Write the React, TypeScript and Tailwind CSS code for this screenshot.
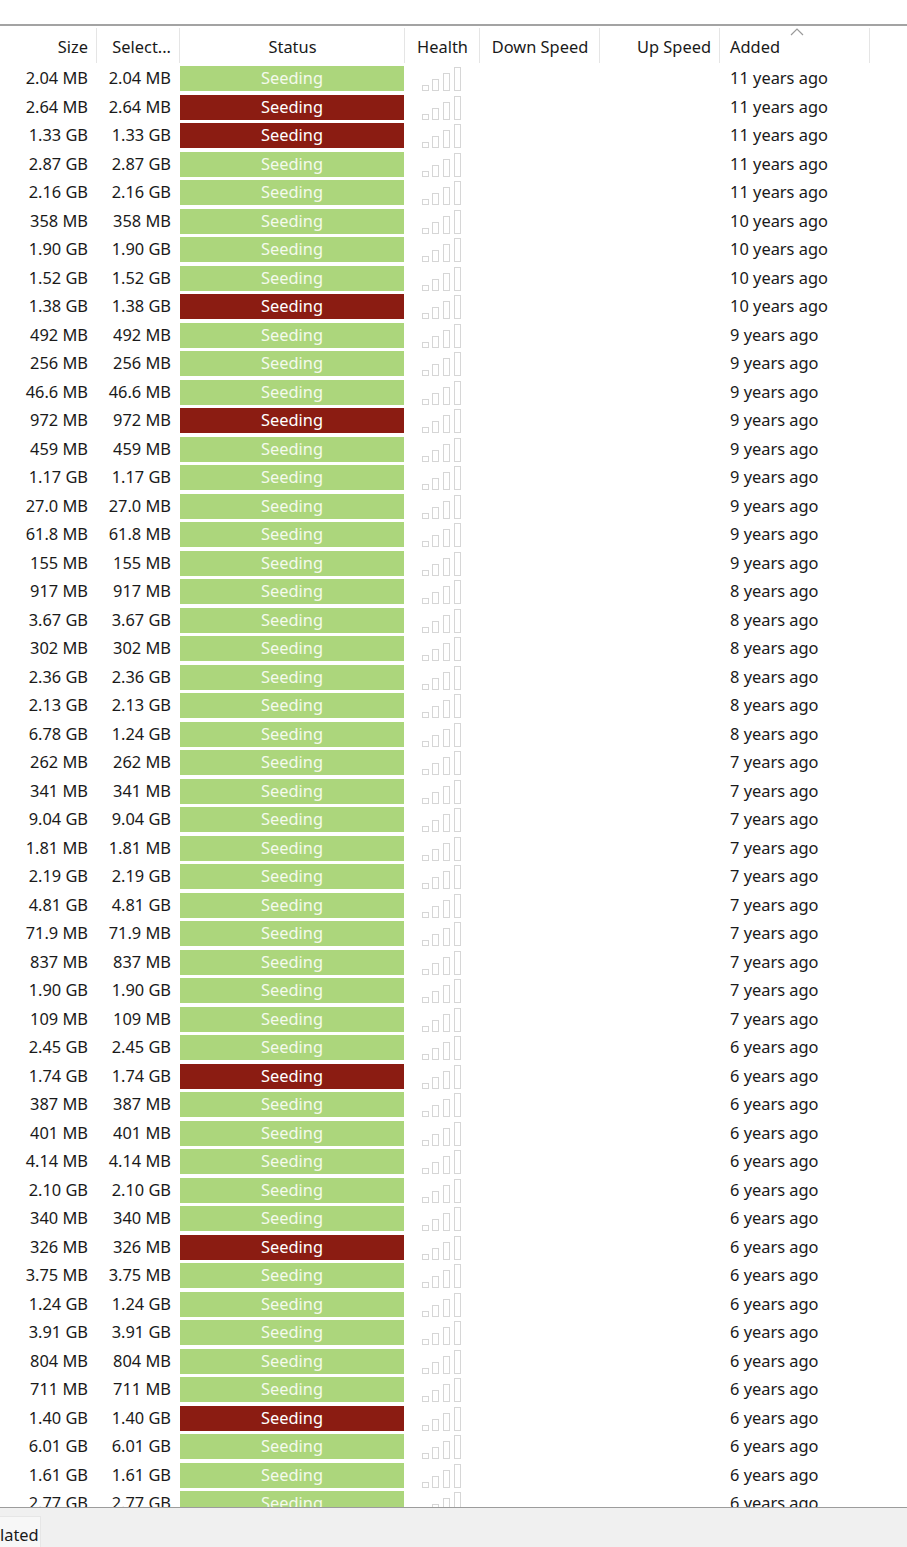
import React from 'react';

type Row = { size: string; sel?: string; bad?: boolean; age: number };

const rows: Row[] = [
  { size: '2.04 MB', age: 11 },
  { size: '2.64 MB', bad: true, age: 11 },
  { size: '1.33 GB', bad: true, age: 11 },
  { size: '2.87 GB', age: 11 },
  { size: '2.16 GB', age: 11 },
  { size: '358 MB', age: 10 },
  { size: '1.90 GB', age: 10 },
  { size: '1.52 GB', age: 10 },
  { size: '1.38 GB', bad: true, age: 10 },
  { size: '492 MB', age: 9 },
  { size: '256 MB', age: 9 },
  { size: '46.6 MB', age: 9 },
  { size: '972 MB', bad: true, age: 9 },
  { size: '459 MB', age: 9 },
  { size: '1.17 GB', age: 9 },
  { size: '27.0 MB', age: 9 },
  { size: '61.8 MB', age: 9 },
  { size: '155 MB', age: 9 },
  { size: '917 MB', age: 8 },
  { size: '3.67 GB', age: 8 },
  { size: '302 MB', age: 8 },
  { size: '2.36 GB', age: 8 },
  { size: '2.13 GB', age: 8 },
  { size: '6.78 GB', sel: '1.24 GB', age: 8 },
  { size: '262 MB', age: 7 },
  { size: '341 MB', age: 7 },
  { size: '9.04 GB', age: 7 },
  { size: '1.81 MB', age: 7 },
  { size: '2.19 GB', age: 7 },
  { size: '4.81 GB', age: 7 },
  { size: '71.9 MB', age: 7 },
  { size: '837 MB', age: 7 },
  { size: '1.90 GB', age: 7 },
  { size: '109 MB', age: 7 },
  { size: '2.45 GB', age: 6 },
  { size: '1.74 GB', bad: true, age: 6 },
  { size: '387 MB', age: 6 },
  { size: '401 MB', age: 6 },
  { size: '4.14 MB', age: 6 },
  { size: '2.10 GB', age: 6 },
  { size: '340 MB', age: 6 },
  { size: '326 MB', bad: true, age: 6 },
  { size: '3.75 MB', age: 6 },
  { size: '1.24 GB', age: 6 },
  { size: '3.91 GB', age: 6 },
  { size: '804 MB', age: 6 },
  { size: '711 MB', age: 6 },
  { size: '1.40 GB', bad: true, age: 6 },
  { size: '6.01 GB', age: 6 },
  { size: '1.61 GB', age: 6 },
  { size: '2.77 GB', age: 6 },
];

const HealthIcon = () => (
  <svg width="41" height="25" viewBox="0 0 41 25" className="block">
    <rect x="0.5" y="19.5" width="6" height="5" fill="none" stroke="#d6d6d6" />
    <rect x="10.5" y="13.5" width="6" height="11" fill="none" stroke="#d6d6d6" />
    <rect x="21.5" y="7.5" width="6" height="17" fill="none" stroke="#d6d6d6" />
    <rect x="32.5" y="1.5" width="6" height="23" fill="none" stroke="#d6d6d6" />
  </svg>
);

const Sep = () => <div className="absolute right-0 top-[2px] bottom-[1px] w-px bg-[#e5e5e5]" />;

export default function App() {
  return (
    <div
      className="w-[907px] h-[1547px] bg-white flex flex-col overflow-hidden text-[16.4px] text-[#1a1a1a]"
      style={{ fontFamily: '"Noto Sans", "Open Sans", sans-serif' }}
    >
      <div className="h-[24px] shrink-0" />
      <div className="h-[2px] shrink-0 bg-[#a3a3a3]" />

      {/* header */}
      <div className="h-[38px] shrink-0 flex items-center">
        <div className="relative w-[97px] h-full flex items-center justify-end pr-[9px] pt-[4px]">Size<Sep /></div>
        <div className="relative w-[83px] h-full flex items-center justify-end pr-[9px] pt-[4px]">Select...<Sep /></div>
        <div className="relative w-[225px] h-full flex items-center justify-center pt-[4px]">Status<Sep /></div>
        <div className="relative w-[75px] h-full flex items-center justify-center pt-[4px]">Health<Sep /></div>
        <div className="relative w-[120px] h-full flex items-center justify-center pt-[4px]">Down Speed<Sep /></div>
        <div className="relative w-[120px] h-full flex items-center justify-end pr-[9px] pt-[4px]">Up Speed<Sep /></div>
        <div className="relative w-[150px] h-full flex items-center pl-[10px] pt-[4px]">
          Added
          <svg width="14" height="8" viewBox="0 0 14 8" className="absolute left-[70px] top-[2px]">
            <polyline points="1,7 7,1 13,7" fill="none" stroke="#9a9a9a" strokeWidth="1.2" />
          </svg>
          <Sep />
        </div>
        <div className="flex-1 h-full" />
      </div>

      {/* rows */}
      <div className="flex-1 overflow-hidden">
        {rows.map((r, i) => (
          <div key={i} className="h-[28.5px] flex items-center">
            <div className="w-[97px] text-right pr-[9px] pt-px whitespace-nowrap">{r.size}</div>
            <div className="w-[83px] text-right pr-[9px] pt-px whitespace-nowrap">{r.sel ?? r.size}</div>
            <div className="w-[225px] h-full pt-[2px] pb-[1.5px] pr-px">
              <div
                className={
                  r.bad
                    ? 'h-full bg-[#8b1c12] text-white flex items-center justify-center'
                    : 'h-full bg-[#acd67c] text-[#f4faec] flex items-center justify-center'
                }
              >
                Seeding
              </div>
            </div>
            <div className="w-[75px] h-full flex items-end justify-center pb-[1.5px]">
              <HealthIcon />
            </div>
            <div className="w-[120px]" />
            <div className="w-[120px]" />
            <div className="w-[150px] pl-[10px] pt-px whitespace-nowrap">{r.age} years ago</div>
          </div>
        ))}
      </div>

      {/* bottom tab strip */}
      <div className="h-px shrink-0 bg-[#9c9c9c]" />
      <div className="h-[39px] shrink-0 bg-[#f0f0f0] flex flex-col">
        <div className="h-[8px]" />
        <div className="flex-1 flex">
          <div className="w-[41px] bg-[#f7f7f7] border-r border-t border-[#e6e6e6] flex items-center leading-none pt-[6px]">
            lated
          </div>
        </div>
      </div>
    </div>
  );
}
